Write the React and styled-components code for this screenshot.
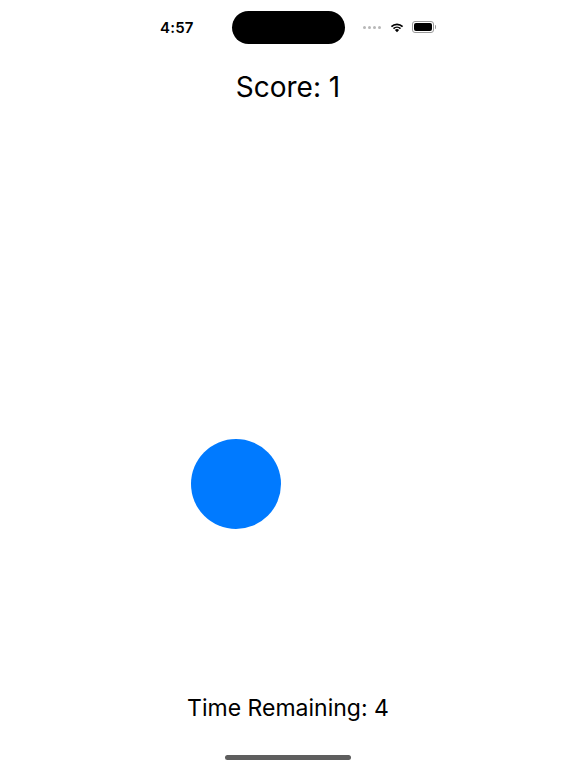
import React from 'react'
import styled, { createGlobalStyle } from 'styled-components'

const GlobalStyle = createGlobalStyle`
  html, body {
    margin: 0;
    padding: 0;
    background: #ffffff;
  }
  body {
    font-family: Inter, "Noto Sans", sans-serif;
    color: #000;
  }
`

function App() {
  return (
    <Screen>
      <GlobalStyle />
      <StatusBar>
        <Clock>4:57</Clock>
        <Island />
        <StatusIcons>
          <Dots>
            <Dot /><Dot /><Dot /><Dot />
          </Dots>
          <svg width="14" height="11" viewBox="0 0 14 11">
            <path d="M7 10.2 L4.9 8.1 A3 3 0 0 1 9.1 8.1 Z" fill="#000" />
            <path d="M2.9 6.1 A5.8 5.8 0 0 1 11.1 6.1 L9.9 7.3 A4.1 4.1 0 0 0 4.1 7.3 Z" fill="#000" />
            <path d="M0.8 4 A8.8 8.8 0 0 1 13.2 4 L12 5.2 A7.1 7.1 0 0 0 2 5.2 Z" fill="#000" />
          </svg>
          <Battery>
            <BatteryFill />
          </Battery>
        </StatusIcons>
      </StatusBar>

      <Score>Score: 1</Score>

      <Field>
        <Target style={{ left: 191, top: 439 - 115 }} />
      </Field>

      <Timer>Time Remaining: 4</Timer>
      <HomeBar>
        <HomeIndicator />
      </HomeBar>
    </Screen>
  )
}

export default App

const Screen = styled.div`
  width: 576px;
  height: 768px;
  display: flex;
  flex-direction: column;
  overflow: hidden;
  background: #fff;
`

const StatusBar = styled.div`
  height: 54px;
  position: relative;
  display: flex;
  align-items: center;
  padding: 0 139px 0 160px;
  justify-content: space-between;
`

const Clock = styled.div`
  font-size: 15px;
  font-weight: 600;
  letter-spacing: 0.2px;
`

const Island = styled.div`
  position: absolute;
  left: 232px;
  top: 11px;
  width: 113px;
  height: 33px;
  border-radius: 17px;
  background: #000;
`

const StatusIcons = styled.div`
  display: flex;
  align-items: center;
  gap: 8px;
`

const Dots = styled.div`
  display: flex;
  gap: 2px;
  margin-right: 1px;
`

const Dot = styled.span`
  width: 3px;
  height: 3px;
  border-radius: 50%;
  background: #b8b8b8;
`

const Battery = styled.div`
  position: relative;
  width: 18px;
  height: 8px;
  border: 1px solid #9a9a9a;
  border-radius: 3px;
  padding: 1px;
  box-sizing: content-box;
  margin-right: 3px;

  &:after {
    content: "";
    position: absolute;
    right: -3px;
    top: 3px;
    width: 1.5px;
    height: 4px;
    border-radius: 0 1px 1px 0;
    background: #9a9a9a;
  }
`

const BatteryFill = styled.div`
  width: 100%;
  height: 100%;
  border-radius: 2px;
  background: #000;
`

const Score = styled.div`
  height: 56px;
  margin-top: 5px;
  display: flex;
  align-items: center;
  justify-content: center;
  font-size: 28px;
  font-weight: 400;
`

const Field = styled.div`
  flex: 1;
  position: relative;
`

const Target = styled.div`
  position: absolute;
  width: 90px;
  height: 90px;
  border-radius: 50%;
  background: #007aff;
`

const Timer = styled.div`
  height: 40px;
  display: flex;
  align-items: center;
  justify-content: center;
  font-size: 23px;
`

const HomeBar = styled.div`
  height: 40px;
  display: flex;
  justify-content: center;
  align-items: flex-start;
  padding-top: 27px;
  box-sizing: border-box;
`

const HomeIndicator = styled.div`
  width: 126px;
  height: 5px;
  border-radius: 3px;
  background: #5e5e5e;
`
